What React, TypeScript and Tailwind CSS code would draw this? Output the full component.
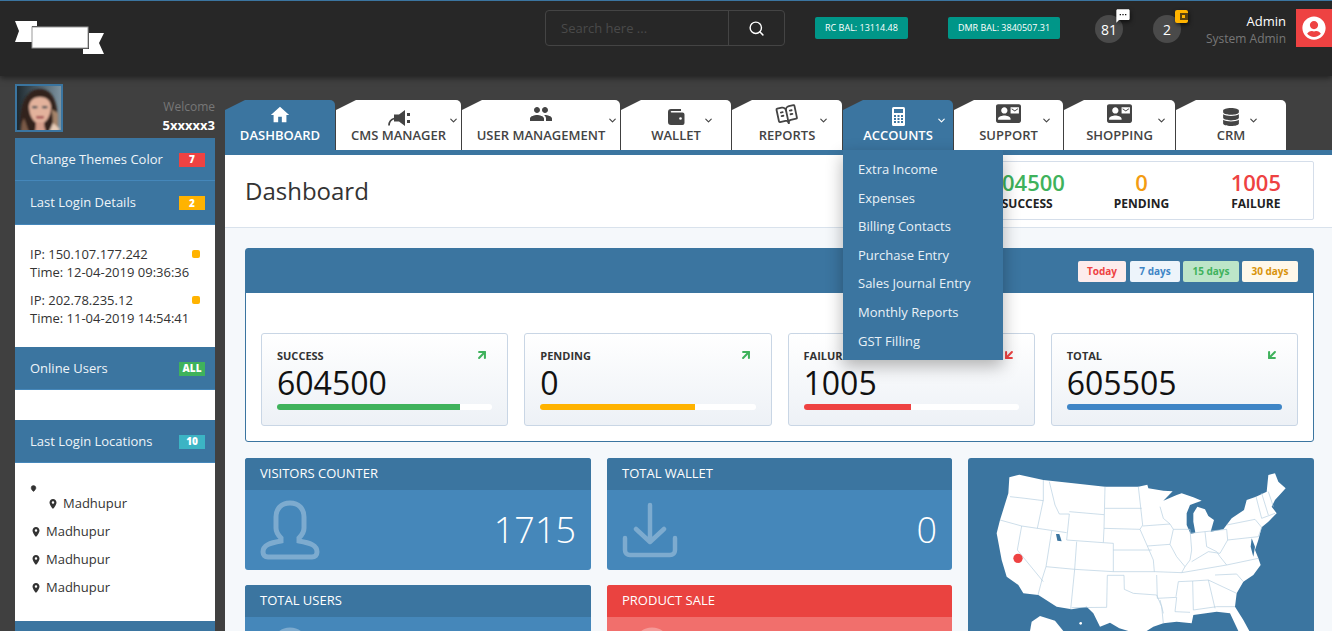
import { ChevronDown, ArrowUpRight, ArrowDownLeft, Search, MapPin } from "lucide-react";
import { MdHome, MdPeople, MdContactMail, MdLocationOn, MdSms } from "react-icons/md";
import { FaDatabase, FaUserCircle } from "react-icons/fa";
import { LuBookOpenText } from "react-icons/lu";
import type { ReactNode } from "react";

function HornIcon() {
  return (
    <svg viewBox="0 0 22 16" className="h-[16px] w-[22px]" fill="currentColor">
      <path d="M1 15.5C1 11.5 3 9.5 6 8.5" fill="none" stroke="currentColor" strokeWidth="1.8" />
      <path d="M6 4.5H11L17 0V16L11 11.5H6Z" />
      <rect x="19" y="3" width="3" height="3" />
      <rect x="19" y="10" width="3" height="3" />
    </svg>
  );
}

function WalletIcon() {
  return (
    <svg viewBox="0 0 18 18" className="h-[18px] w-[18px]" fill="currentColor">
      <path d="M1 4a3 3 0 0 1 3-3h10v2H4.5a.8.8 0 0 0 0 1.6H15.500a2 2 0 0 1 2 2V15a2 2 0 0 1-2 2H4a3 3 0 0 1-3-3V4z" />
      <circle cx="13.500" cy="10.500" r="1.300" fill="#fff" />
    </svg>
  );
}

function CalcIcon() {
  return (
    <svg viewBox="0 0 13 19" className="h-[19px] w-[13px]">
      <rect width="13" height="19" rx="1.500" fill="#fff" />
      <rect x="2" y="2" width="9" height="4" fill="#3b75a0" />
      {[8, 11, 14].map((y) =>
        [2, 5.5, 9].map((x) => <rect key={`${x}-${y}`} x={x} y={y} width="2" height="2" fill="#3b75a0" />)
      )}
    </svg>
  );
}

const tabs: { label: string; w: string; icon: ReactNode; chev?: string }[] = [
  { label: "CMS MANAGER", w: "w-[125px]", icon: <HornIcon />, chev: "right-[2px]" },
  { label: "USER MANAGEMENT", w: "w-[158px]", icon: <MdPeople className="h-[24px] w-[24px]" />, chev: "right-[2px]" },
  { label: "WALLET", w: "w-[110px]", icon: <WalletIcon />, chev: "right-[17px]" },
  { label: "REPORTS", w: "w-[110px]", icon: <LuBookOpenText className="h-[22px] w-[22px] -rotate-12" />, chev: "right-[13px]" },
];
const tabsAfter: { label: string; w: string; icon: ReactNode; chev: string }[] = [
  { label: "SUPPORT", w: "w-[109px]", icon: <MdContactMail className="h-[25px] w-[25px]" />, chev: "right-[11px]" },
  { label: "SHOPPING", w: "w-[111px]", icon: <MdContactMail className="h-[25px] w-[25px]" />, chev: "right-[8px]" },
  { label: "CRM", w: "w-[110px]", icon: <FaDatabase className="h-[18px] w-[18px]" />, chev: "right-[27px]" },
];
const menu = ["Extra Income", "Expenses", "Billing Contacts", "Purchase Entry", "Sales Journal Entry", "Monthly Reports", "GST Filling"];

const cards = [
  { label: "SUCCESS", value: "604500", bar: "bg-[#3fb25c]", pct: "w-[85%]", up: true, color: "text-[#3fb25c]" },
  { label: "PENDING", value: "0", bar: "bg-[#ffb300]", pct: "w-[72%]", up: true, color: "text-[#3fb25c]" },
  { label: "FAILURE", value: "1005", bar: "bg-[#ee4242]", pct: "w-[50%]", up: false, color: "text-[#ee4242]" },
  { label: "TOTAL", value: "605505", bar: "bg-[#3e85c6]", pct: "w-full", up: false, color: "text-[#3fb25c]" },
];

function Tab({ label, w, icon, chev }: { label: string; w: string; icon: ReactNode; chev?: string }) {
  return (
    <div className={`${w} relative h-[50px] shrink-0 rounded-tr-[5px] bg-white text-[#444] [clip-path:polygon(20px_0,100%_0,100%_100%,0_100%,0_10px)]`}>
      <div className="flex h-[26px] items-end justify-center">{icon}</div>
      <div className="text-center text-[13px] font-semibold leading-[18px] whitespace-nowrap">{label}</div>
      {chev && <ChevronDown className={`absolute top-[15px] h-[11px] w-[11px] ${chev}`} strokeWidth={2.5} />}
    </div>
  );
}

function SideHead({ title, badge, color, h = "h-[43px]" }: { title: string; badge: string; color: string; h?: string }) {
  return (
    <div className={`${h} flex items-center justify-between border-b border-[#4587ba] bg-[#3b75a0] pl-[15px] pr-[10px] pt-[1px] text-[13px] text-[#eef4f8]`}>
      <span>{title}</span>
      <span className={`${color} flex h-[14px] w-[26px] items-center justify-center text-[10px] font-extrabold text-white`}>{badge}</span>
    </div>
  );
}

function Place({ nudge }: { nudge?: boolean }) {
  return (
    <div className={`flex h-[28px] items-center gap-[4px] text-[13px] text-[#333] ${nudge ? "pl-[17px]" : ""}`}>
      <MdLocationOn className="h-[12px] w-[12px] text-[#333]" />
      Madhupur
    </div>
  );
}

function StatBox({ title, value, head, body, icon }: { title: string; value: string; head: string; body: string; icon: ReactNode }) {
  return (
    <div className={`h-[112px] overflow-hidden rounded-[3px] ${body}`}>
      <div className={`flex h-[32px] items-center px-[15px] text-[13px] text-white ${head}`}>{title}</div>
      <div className="flex h-[80px] items-center justify-between pl-[15px] pr-[15px] text-white">
        {icon}
        <span className="text-[36px] font-light leading-none">{value}</span>
      </div>
    </div>
  );
}

function PersonIcon() {
  return (
    <svg viewBox="0 0 60 60" className="h-[60px] w-[60px] text-white/30" fill="none" stroke="currentColor" strokeWidth="5">
      <path d="M30 3c-9 0-14 6-14 14v11c0 5 3 8 5 10v3C10 43 3 45 3 52c0 3 2 5 5 5h44c3 0 5-2 5-5 0-7-7-9-18-11v-3c2-2 5-5 5-10V17C44 9 39 3 30 3z" />
    </svg>
  );
}

function DownloadIcon() {
  return (
    <svg viewBox="0 0 56 56" className="h-[56px] w-[56px] text-white/30" fill="none" stroke="currentColor" strokeWidth="4.5" strokeLinecap="round" strokeLinejoin="round">
      <path d="M28 3V39M14 27L28 40L42 27M3 36V48c0 3 2 5 5 5H48c3 0 5-2 5-5V36" />
    </svg>
  );
}

function UsMap() {
  const lines = [
    "150,140 195,145 250,152",
    "120,210 185,228 320,248",
    "250,90 250,150 232,235",
    "268,95 285,165 298,192 328,192 320,270",
    "328,185 432,194",
    "435,110 432,235 430,278",
    "320,270 430,278 460,280 460,365",
    "350,275 344,358",
    "460,300 575,300",
    "275,243 258,350 247,385 234,435",
    "185,228 172,300 250,395",
    "258,350 344,358 460,365 585,365 665,368",
    "344,358 332,478",
    "335,473 440,472 442,376 492,376 493,418 520,430 590,435 605,470 610,520",
    "590,375 592,445 650,442 645,485 690,487",
    "600,450 610,490",
    "535,110 548,225 540,238",
    "435,175 545,175",
    "432,235 540,238 562,288 580,330 583,365",
    "548,228 630,222 640,238 630,283 562,288",
    "600,170 610,205 630,222",
    "640,238 690,238 695,300 690,330 675,350 665,368",
    "630,283 650,320 675,350",
    "690,250 735,245 740,290 770,305 780,320",
    "735,245 800,238 803,270 780,310 745,305 695,335",
    "800,225 885,208 905,232 895,260 803,270",
    "665,368 800,345 895,325",
    "780,320 800,345",
    "655,395 698,393 745,390 830,430",
    "698,393 700,480",
    "745,390 765,475",
    "655,395 648,440",
    "700,480 770,470 825,470",
    "765,375 830,372 850,395",
    "888,140 905,205",
    "905,130 925,195",
    "925,125 940,170",
    "905,205 945,190",
  ];
  return (
    <svg viewBox="24 24 1038 519" className="h-[173px] w-[346px]">
      <path
        fill="#fff"
        d="M148 82L178 74L250 90L340 100L435 110L535 110L562 104L565 115L610 122L638 124L610 152L650 135L665 130L700 142L725 152L708 158L690 165L680 190L680 225L692 252L706 248L700 215L700 190L712 170L735 178L745 198L762 210L752 245L790 238L815 205L852 180L860 150L888 140L920 125L925 75L945 70L955 95L977 115L945 150L935 170L950 190L925 215L905 232L895 270L885 300L895 325L902 345L880 375L850 395L830 430L825 470L850 510L868 543L835 543L810 490L770 485L700 495L695 520L650 515L610 520L580 530L560 543L505 543L478 535L450 518L420 530L400 490L380 470L335 478L290 470L235 435L190 430L175 405L140 380L125 330L110 250L120 210L145 130Z"
      />
      <path fill="#fff" d="M215 515L240 498L285 512L310 543L210 543Z" />
      <circle cx="362" cy="520" r="4" fill="#fff" />
      <path fill="#3b75a0" d="M288 252L298 252L305 274L292 272Z" />
      <path fill="#3b75a0" d="M875 265L885 290L880 320L872 290Z" />
      {lines.map((p) => (
        <polyline key={p} points={p} fill="none" stroke="#b4cde0" strokeWidth="2" />
      ))}
      <circle cx="174" cy="325" r="14" fill="#ee4242" />
    </svg>
  );
}

function Avatar() {
  return (
    <svg viewBox="0 0 44 44" className="h-full w-full">
      <defs>
        <filter id="soft"><feGaussianBlur stdDeviation="1" /></filter>
        <linearGradient id="bg" x1="0" y1="0" x2="1" y2="0">
          <stop offset="0" stopColor="#1f2a30" />
          <stop offset="1" stopColor="#7d93a0" />
        </linearGradient>
      </defs>
      <rect width="44" height="44" fill="url(#bg)" />
      <g filter="url(#soft)">
        <path d="M4 46C1 26 6 3 23 3c16 0 20 22 16 43Z" fill="#33221d" />
        <path d="M34 46c3-8 2-17 0-23l7 4v19Z" fill="#a5846a" />
        <path d="M4 46c0-6 1-10 3-14l5 14Z" fill="#7a5a46" />
        <path d="M32 46c3 0 10 0 11-3l-7-6Z" fill="#e8cdb8" />
        <path d="M12 20c1-6 5-9 11-9s10 3 11 9c0 11-6 18-11 18s-11-7-11-18Z" fill="#e3b29c" />
        <path d="M18 46c1-5 1-8 1-10h8c0 2 0 5 2 10Z" fill="#d59f8b" />
        <rect x="15" y="20" width="5.500" height="2.200" rx="1" fill="#27424c" />
        <rect x="25" y="20" width="5.500" height="2.200" rx="1" fill="#27424c" />
        <rect x="19" y="30" width="8" height="2.400" rx="1" fill="#a3484f" />
      </g>
    </svg>
  );
}

export default function App() {
  return (
    <div className="flex h-[631px] flex-col overflow-hidden bg-[#404040] font-['Open_Sans',sans-serif]">
      {/* Top bar */}
      <header className="relative z-10 flex h-[76px] shrink-0 items-start border-t-[1px] border-[#3b75a0] bg-[#272727] shadow-[0_2px_6px_rgba(0,0,0,0.5)]">
        <div className="ml-[15px] mt-[20px] w-[530px] shrink-0">
          <svg viewBox="0 0 90 34" className="h-[34px] w-[90px]">
            <path d="M0 0H22V5H17V21H0L4 10Z" fill="#fff" />
            <path d="M68 12H89L84 22L89 33H68V28H74V12Z" fill="#fff" />
            <rect x="17" y="6" width="56" height="21" fill="#fff" stroke="#999" />
          </svg>
        </div>
        <div className="mt-[9px] flex h-[36px] w-[240px] shrink-0 rounded-[4px] border border-[#444]">
          <div className="flex w-[183px] items-center border-r border-[#444] pl-[15px] pt-[1px] text-[13px] text-[#4a4a4a]">Search here ...</div>
          <div className="flex flex-1 items-center justify-center text-white"><Search className="h-[17px] w-[17px]" strokeWidth={2} /></div>
        </div>
        <div className="ml-[30px] mt-[16px] flex h-[22px] w-[93px] items-center justify-center rounded-[2px] bg-[#009688] text-[9px] text-white">RC BAL: 13114.48</div>
        <div className="ml-[40px] mt-[16px] flex h-[22px] w-[112px] items-center justify-center rounded-[2px] bg-[#009688] text-[9px] text-white">DMR BAL: 3840507.31</div>
        <div className="relative ml-[35px] mt-[14px] flex h-[28px] w-[28px] items-center justify-center rounded-full bg-[#4a4a4a] text-[14px] text-white">
          81
          <MdSms className="absolute -top-[7px] left-[20px] h-[16px] w-[16px] text-white drop-shadow-[1px_2px_2px_rgba(0,0,0,0.6)]" />
        </div>
        <div className="relative ml-[30px] mt-[14px] flex h-[28px] w-[28px] items-center justify-center rounded-full bg-[#4a4a4a] text-[14px] text-white">
          2
          <svg viewBox="0 0 13 13" className="absolute -top-[5px] left-[22px] h-[13px] w-[13px] drop-shadow-[1px_2px_2px_rgba(0,0,0,0.6)]">
            <rect width="13" height="13" rx="2" fill="#ffb300" />
            <rect x="5" y="3" width="8" height="7" fill="#5a4210" />
            <rect x="7" y="5" width="3" height="3" fill="#ffb300" />
          </svg>
        </div>
        <div className="ml-[20px] mt-[11px] w-[85px] text-right">
          <div className="text-[13px] leading-[18px] text-white">Admin</div>
          <div className="text-[12px] leading-[18px] text-[#777]">System Admin</div>
        </div>
        <div className="ml-[10px] mt-[8px] flex h-[38px] w-[36px] items-center justify-center bg-[#ee4242] text-white">
          <FaUserCircle className="h-[24px] w-[24px]" />
        </div>
      </header>

      <div className="flex min-h-0 flex-1">
        {/* Sidebar */}
        <aside className="ml-[15px] mr-[10px] w-[200px] shrink-0 pt-[8px]">
          <div className="flex h-[54px] items-start justify-between">
            <div className="h-[48px] w-[48px] overflow-hidden border-2 border-[#3b75a0]">
              <Avatar />
            </div>
            <div className="mt-[14px] text-right">
              <div className="text-[12px] leading-[18px] text-[#777]">Welcome</div>
              <div className="text-[13px] font-bold leading-[18px] text-white">5xxxxx3</div>
            </div>
          </div>
          <SideHead title="Change Themes Color" badge="7" color="bg-[#ee4242]" />
          <SideHead title="Last Login Details" badge="2" color="bg-[#ffb300]" h="h-[44px]" />
          <div className="h-[122px] bg-white pl-[15px] pr-[15px] pt-[20px] text-[13px] leading-[18px] text-[#333]">
            <div className="relative mb-[10px] whitespace-nowrap">
              <div>IP: 150.107.177.242</div>
              <div>Time: 12-04-2019 09:36:36</div>
              <span className="absolute right-0 top-[5px] h-[8px] w-[8px] rounded-[2px] bg-[#ffb300]" />
            </div>
            <div className="relative whitespace-nowrap">
              <div>IP: 202.78.235.12</div>
              <div>Time: 11-04-2019 14:54:41</div>
              <span className="absolute right-0 top-[5px] h-[8px] w-[8px] rounded-[2px] bg-[#ffb300]" />
            </div>
          </div>
          <SideHead title="Online Users" badge="ALL" color="bg-[#3fb25c]" />
          <div className="h-[30px] bg-white" />
          <SideHead title="Last Login Locations" badge="10" color="bg-[#3cb4c4]" />
          <div className="h-[158px] bg-white pl-[15px] pt-[22px]">
            <MapPin className="h-[7px] w-[7px] fill-[#333] text-[#333]" />
            <div className="-mt-[2px]">
              <Place nudge />
              <Place />
              <Place />
              <Place />
            </div>
          </div>
          <div className="h-[40px] bg-[#3b75a0]" />
        </aside>

        {/* Main */}
        <main className="min-w-0 flex-1 pt-[24px]">
          <nav className="relative z-20 flex h-[50px] gap-[1px]">
            <div className="relative h-[50px] w-[110px] shrink-0 rounded-tr-[5px] bg-[#3b75a0] text-white [clip-path:polygon(20px_0,100%_0,100%_100%,0_100%,0_10px)]">
              <div className="flex h-[26px] items-end justify-center"><MdHome className="h-[22px] w-[22px]" /></div>
              <div className="text-center text-[13px] font-semibold leading-[18px]">DASHBOARD</div>
            </div>
            {tabs.map((t) => <Tab key={t.label} {...t} />)}
            <div className="relative h-[50px] w-[110px] shrink-0">
              <div className="relative h-[50px] rounded-tr-[5px] bg-[#3b75a0] text-white [clip-path:polygon(20px_0,100%_0,100%_100%,0_100%,0_10px)]">
                <div className="flex h-[26px] items-end justify-center"><CalcIcon /></div>
                <div className="text-center text-[13px] font-semibold leading-[18px]">ACCOUNTS</div>
                <ChevronDown className="absolute right-[6px] top-[15px] h-[11px] w-[11px]" strokeWidth={2.5} />
              </div>
              <div className="absolute left-0 top-full h-[210px] w-[160px] bg-[#3b75a0] pl-[15px] pt-[5.5px] text-[13px] text-[#e8f1f7] shadow-[0_6px_16px_rgba(0,0,0,0.3)]">
                {menu.map((m) => (
                  <div key={m} className="flex h-[28.6px] items-center whitespace-nowrap">{m}</div>
                ))}
              </div>
            </div>
            {tabsAfter.map((t) => <Tab key={t.label} {...t} />)}
          </nav>

          <div className="h-[481px] border-t-[5px] border-[#3b75a0] bg-[#f5f8fb]">
            <div className="flex h-[73px] items-start justify-between border-b border-[#d9e2ec] bg-white pl-[20px] pr-[18px]">
              <h1 className="mt-[23px] text-[24px] leading-[26px] text-[#333]">Dashboard</h1>
              <div className="mt-[6px] grid h-[59px] w-[345px] grid-cols-3 rounded-[2px] border border-[#d5deea] pt-[5px] text-center">
                {[["604500", "SUCCESS", "text-[#3fb25c]"], ["0", "PENDING", "text-[#f39c12]"], ["1005", "FAILURE", "text-[#ee4242]"]].map(([v, l, c]) => (
                  <div key={l}>
                    <div className={`text-[22px] font-semibold leading-[30px] ${c}`}>{v}</div>
                    <div className="text-[12px] font-bold leading-[14px] text-[#222]">{l}</div>
                  </div>
                ))}
              </div>
            </div>

            <div className="pl-[20px] pr-[18px] pt-[20px]">
              <section className="h-[194px] rounded-[3px] border border-[#3b75a0] bg-white">
                <div className="flex h-[44px] items-center justify-end gap-[3px] bg-[#3b75a0] pr-[15px] text-[10px] font-bold">
                  <span className="mr-[1px] flex h-[21px] w-[48px] items-center justify-center rounded-[2px] bg-[#fdecec] text-[#ee4242]">Today</span>
                  <span className="flex h-[21px] w-[50px] items-center justify-center rounded-[2px] bg-[#edf4fb] text-[#3e85c6]">7 days</span>
                  <span className="flex h-[21px] w-[56px] items-center justify-center rounded-[2px] bg-[#bde5c8] text-[#3fb25c]">15 days</span>
                  <span className="flex h-[21px] w-[56px] items-center justify-center rounded-[2px] bg-[#fff8ea] text-[#d9930b]">30 days</span>
                </div>
                <div className="grid grid-cols-4 gap-[16px] px-[15px] pt-[40px]">
                  {cards.map((c) => (
                    <div key={c.label} className="relative h-[93px] rounded-[3px] border border-[#c9d6e5] bg-gradient-to-b from-white to-[#edf1f6] px-[15px] pt-[15px]">
                      <div className="text-[11px] font-bold leading-[14px] text-[#333]">{c.label}</div>
                      {c.up
                        ? <ArrowUpRight className={`absolute right-[18px] top-[14px] h-[14px] w-[14px] ${c.color}`} strokeWidth={3.5} />
                        : <ArrowDownLeft className={`absolute right-[18px] top-[14px] h-[14px] w-[14px] ${c.color}`} strokeWidth={3.5} />}
                      <div className="text-[32px] leading-[40px] text-[#111]">{c.value}</div>
                      <div className="mt-[1px] h-[6px] overflow-hidden rounded-full bg-white">
                        <div className={`h-full ${c.bar} ${c.pct}`} />
                      </div>
                    </div>
                  ))}
                </div>
              </section>

              <div className="mt-[16px] grid grid-cols-[346px_345px_346px] gap-x-[16px] gap-y-[15px]">
                <StatBox title="VISITORS COUNTER" value="1715" head="bg-[#3b75a0]" body="bg-[#4587ba]" icon={<PersonIcon />} />
                <StatBox title="TOTAL WALLET" value="0" head="bg-[#3b75a0]" body="bg-[#4587ba]" icon={<DownloadIcon />} />
                <div className="row-span-2 h-[239px] rounded-[3px] bg-[#3b75a0]">
                  <UsMap />
                </div>
                <StatBox title="TOTAL USERS" value="" head="bg-[#3b75a0]" body="bg-[#4587ba]" icon={<PersonIcon />} />
                <StatBox title="PRODUCT SALE" value="" head="bg-[#ea4340]" body="bg-[#f16f6c]" icon={<PersonIcon />} />
              </div>
            </div>
          </div>
        </main>
      </div>
    </div>
  );
}
